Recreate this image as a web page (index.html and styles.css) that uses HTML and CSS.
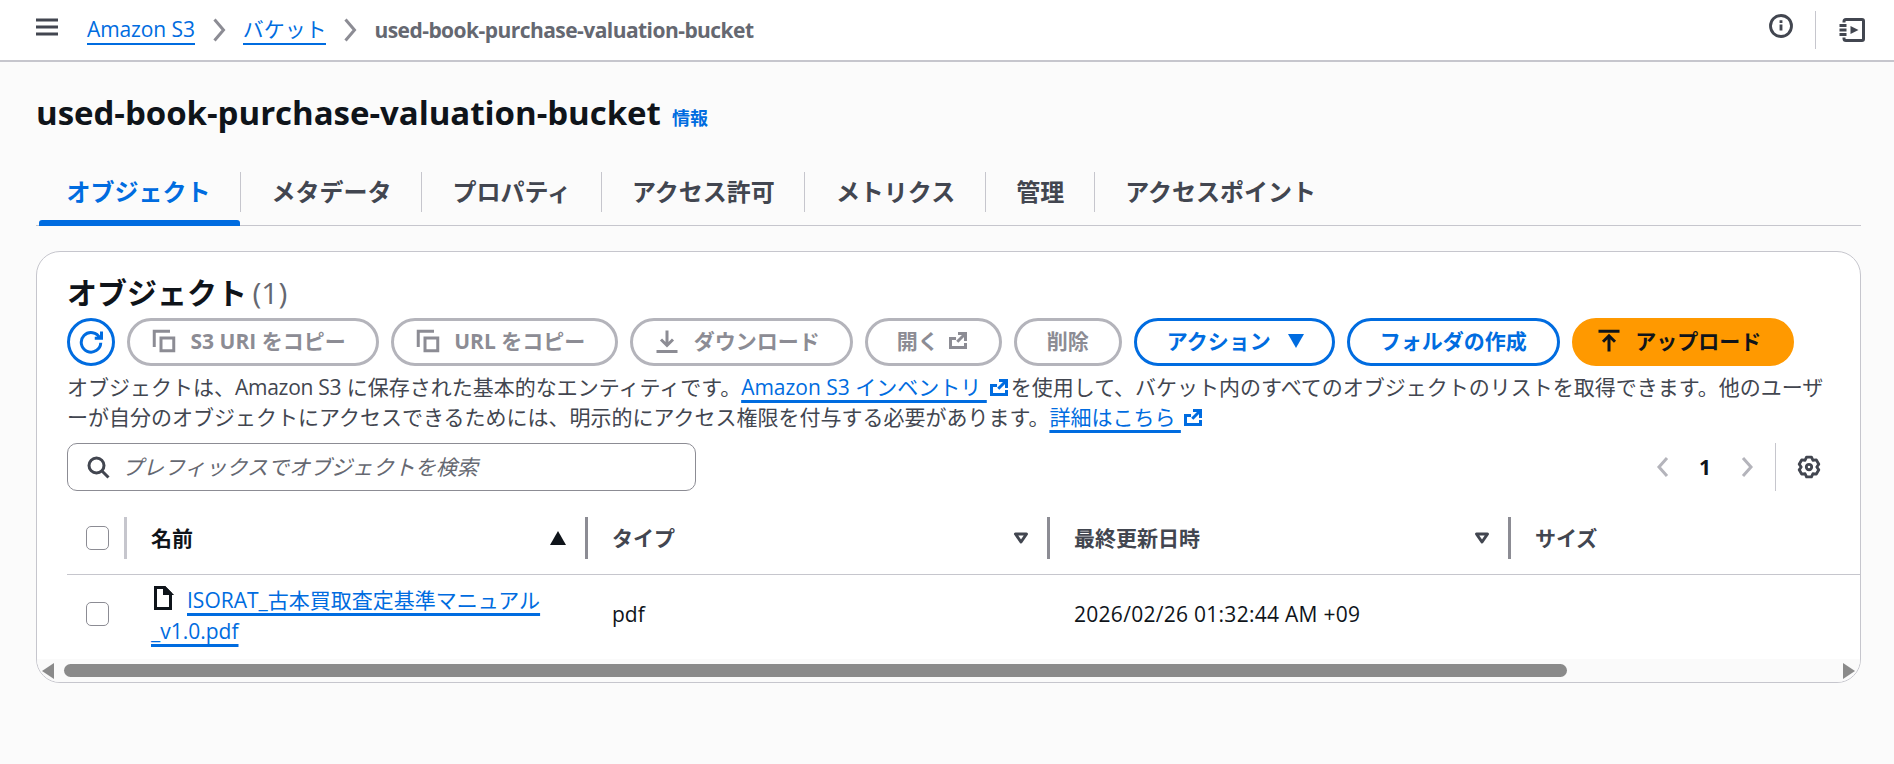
FILE: index.html
```html
<!DOCTYPE html>
<html lang="ja">
<head>
<meta charset="utf-8">
<title>used-book-purchase-valuation-bucket</title>
<link rel="stylesheet" href="styles.css">
</head>
<body>
<header class="topbar">
  <svg class="ic menu" viewBox="0 0 22 18"><path d="M0 2h22M0 9h22M0 16h22"/></svg>
  <nav class="crumbs">
    <a href="#">Amazon S3</a>
    <svg class="ic sep" viewBox="0 0 16 16"><path d="m5 1 6 7-6 7"/></svg>
    <a href="#">バケット</a>
    <svg class="ic sep" viewBox="0 0 16 16"><path d="m5 1 6 7-6 7"/></svg>
    <span class="here">used-book-purchase-valuation-bucket</span>
  </nav>
  <svg class="ic info" viewBox="0 0 16 16"><circle cx="8" cy="8" r="7"/><path d="M8 7v4M8 4.200v1.800"/></svg>
  <span class="topdiv"></span>
  <svg class="ic book" viewBox="0 0 26 24"><path d="M5 4.500V3.500a2 2 0 0 1 2-2h16a1.500 1.500 0 0 1 1.500 1.500v18a1.500 1.500 0 0 1-1.500 1.500H7a2 2 0 0 1-2-2v-1M0.500 7.500h7M0.500 12h7M0.500 16.500h7"/><path class="solid" d="M11.500 8l8 4-8 4z"/></svg>
</header>

<main class="page">
  <div class="titlerow"><h1>used-book-purchase-valuation-bucket</h1><a class="infolink" href="#">情報</a></div>
  <div class="tabs">
    <a class="tab active" href="#">オブジェクト</a>
    <a class="tab" href="#">メタデータ</a>
    <a class="tab" href="#">プロパティ</a>
    <a class="tab" href="#">アクセス許可</a>
    <a class="tab" href="#">メトリクス</a>
    <a class="tab" href="#">管理</a>
    <a class="tab last" href="#">アクセスポイント</a>
  </div>

  <section class="card">
    <div class="cardhead">
      <h2>オブジェクト <span class="count">(1)</span></h2>
      <div class="toolbar">
        <button class="btn refresh"><svg class="ic" viewBox="0 0 16 16"><path d="M10.500 5.500H15V1"/><path d="M14.500 8.500a6.500 6.500 0 1 1-.6-3"/></svg></button>
        <button class="btn off lead"><svg class="ic" viewBox="0 0 16 16"><path d="M1.500 12V1.500H12"/><path d="M6 6h8.500v8.500H6z"/></svg>S3 URI をコピー</button>
        <button class="btn off lead"><svg class="ic" viewBox="0 0 16 16"><path d="M1.500 12V1.500H12"/><path d="M6 6h8.500v8.500H6z"/></svg>URL をコピー</button>
        <button class="btn off lead"><svg class="ic" viewBox="0 0 16 16"><path d="M1 15h14M8 1v10M4 7l4 4 4-4"/></svg>ダウンロード</button>
        <button class="btn off trail">開く<svg class="ic" viewBox="0 0 16 16"><path d="M6.700 6.300H3v6h10V9.300M8 3h5v5M13 3 7.500 8.500"/></svg></button>
        <button class="btn off">削除</button>
        <button class="btn blue trail">アクション<svg class="caret" viewBox="0 0 16 14"><path d="M0 0h16L8 14z"/></svg></button>
        <button class="btn blue">フォルダの作成</button>
        <button class="btn primary lead"><svg class="ic" viewBox="0 0 16 16"><path d="M1 1.500h14M8 15V4.500M4 8.500l4-4 4 4"/></svg>アップロード</button>
      </div>
      <p class="desc">オブジェクトは、<span class="lat">Amazon S3</span> に保存された基本的なエンティティです。<a href="#">Amazon S3 インベントリ </a><svg class="ic ext" viewBox="0 0 16 16"><path d="M6.700 6.300H3v6h10V9.300M8 3h5v5M13 3 7.500 8.500"/></svg>を使用して、バケット内のすべてのオブジェクトのリストを取得できます。他のユーザーが自分のオブジェクトにアクセスできるためには、明示的にアクセス権限を付与する必要があります。<a href="#">詳細はこちら </a><svg class="ic ext" viewBox="0 0 16 16"><path d="M6.700 6.300H3v6h10V9.300M8 3h5v5M13 3 7.500 8.500"/></svg></p>
      <div class="filterrow">
        <label class="search"><svg class="ic" viewBox="0 0 16 16"><circle cx="7" cy="7" r="5"/><path d="m15 15-4.500-4.500"/></svg><span>プレフィックスでオブジェクトを検索</span></label>
        <div class="pager">
          <svg class="ic pg" viewBox="0 0 16 24"><path d="M12 3l-8 9 8 9"/></svg>
          <span class="pnum">1</span>
          <svg class="ic pg" viewBox="0 0 16 24"><path d="M4 3l8 9-8 9"/></svg>
          <span class="pdiv"></span>
          <svg class="ic gear" viewBox="0 0 16 16"><path d="M6.350 1.400H9.650L10.600 3.500 12.890 3.280 14.540 6.130 13.200 8 14.540 9.870 12.890 12.720 10.600 12.500 9.650 14.600H6.350L5.400 12.500 3.110 12.720 1.460 9.870 2.800 8 1.460 6.130 3.110 3.280 5.400 3.500z"/><circle cx="8" cy="8" r="1.800"/></svg>
        </div>
      </div>
    </div>
    <div class="table">
      <div class="th chk"><span class="box"></span></div>
      <div class="th name"><span>名前</span><svg class="sort" viewBox="0 0 16 14"><path d="M8 0l8 14H0z"/></svg></div>
      <div class="th dark"><span>タイプ</span><svg class="sort2" viewBox="0 0 16 14"><path d="M2.500 3h11L8 11z"/></svg></div>
      <div class="th dark"><span>最終更新日時</span><svg class="sort2" viewBox="0 0 16 14"><path d="M2.500 3h11L8 11z"/></svg></div>
      <div class="th plain"><span>サイズ</span></div>
      <div class="td chk"><span class="box"></span></div>
      <div class="td file"><div class="filetext"><svg class="ic fileic" viewBox="0 0 16 16"><path d="M13 15H3V1h6l4 4z"/><path class="corner" d="M9 1v4h4z"/></svg><a href="#">ISORAT_古本買取査定基準マニュアル_v1.0.pdf</a></div></div>
      <div class="td">pdf</div>
      <div class="td date">2026/02/26 01:32:44 AM +09</div>
      <div class="td"></div>
    </div>
    <div class="scroll">
      <svg class="arrow" viewBox="0 0 12 16"><path d="M12 0v16L0 8z"/></svg>
      <div class="track"><div class="thumb"></div></div>
      <svg class="arrow" viewBox="0 0 12 16"><path d="M0 0v16l12-8z"/></svg>
    </div>
  </section>
</main>
</body>
</html>
```

FILE: styles.css
```css
* { box-sizing: border-box; }
html, body { margin: 0; height: 764px; overflow: hidden; }
body {
  background: #fbfbfb;
  color: #0f141a;
  font-family: "Open Sans", "Noto Sans CJK JP", sans-serif;
  font-size: 21px;
  line-height: 30px;
}
a { color: #006ce0; }
.ic { width: 24px; height: 24px; fill: none; stroke: currentColor; stroke-width: 2; flex: none; }
.solid { fill: currentColor; stroke: none; }

.topbar {
  height: 62px;
  background: #fff;
  border-bottom: 2px solid #c6c6cd;
  display: flex;
  align-items: center;
  padding: 0 29px 0 36px;
  color: #424650;
}
.menu { width: 22px; height: 18px; stroke-width: 3; margin-bottom: 6px; }
.crumbs { display: flex; align-items: center; margin-left: 29px; flex: 1; }
.crumbs a { text-decoration: none; border-bottom: 2px solid #006ce0; line-height: 27px; letter-spacing: -0.100px; }
.sep { color: #8c8c94; margin: 0 12px; }
.here { font-weight: 700; color: #656871; letter-spacing: -0.550px; }
.info { margin-bottom: 8px; stroke-width: 1.900; }
.topdiv { width: 1px; height: 38px; background: #c6c6cd; margin: 0 23px 0 22px; }
.book { width: 26px; height: 24px; stroke-width: 3; }

.page { padding: 0 33px 0 36px; }
.titlerow { display: flex; align-items: baseline; height: 110px; padding-top: 31px; gap: 11px; }
h1 { margin: 0; font-size: 33px; line-height: 40px; font-weight: 700; letter-spacing: -0.030px; }
.infolink { font-size: 18px; font-weight: 700; text-decoration: none; }

.tabs { display: flex; height: 54px; border-bottom: 1px solid #c6c6cd; }
.tab {
  position: relative;
  display: flex;
  align-items: center;
  height: 53px;
  padding: 0 30.500px 14px;
  font-size: 24px;
  font-weight: 700;
  color: #424650;
  text-decoration: none;
  white-space: nowrap;
}
.tab::after {
  content: "";
  position: absolute;
  right: 0;
  top: 0;
  bottom: 13px;
  width: 1px;
  background: #c6c6cd;
}
.tab.last::after { display: none; }
.tab.active { color: #006ce0; }
.tab.active::before {
  content: "";
  position: absolute;
  left: 3px;
  right: 1px;
  bottom: -1px;
  height: 6px;
  border-radius: 3px 3px 0 0;
  background: #006ce0;
}

.card {
  margin-top: 25px;
  height: 432px;
  background: #fff;
  border: 1.500px solid #c6c6cd;
  border-radius: 24px;
  overflow: hidden;
  display: flex;
  flex-direction: column;
}
.cardhead { padding: 21px 30px 0; }
h2 { margin: 0; font-size: 30px; line-height: 40px; font-weight: 700; }
.count { font-weight: 400; color: #656871; margin-left: -2.400px; }
.toolbar { display: flex; gap: 12px; margin-top: 5px; height: 48px; }
.btn {
  display: inline-flex;
  align-items: center;
  justify-content: center;
  height: 48px;
  padding: 0 30px 2px;
  border: 3px solid #006ce0;
  border-radius: 30px;
  background: #fff;
  color: #006ce0;
  font: 700 21px/30px "Open Sans", "Noto Sans CJK JP", sans-serif;
  white-space: nowrap;
}
.lead { padding-left: 22px; gap: 14.500px; }
.trail { gap: 11px; }
.off.trail { padding-left: 29px; padding-right: 29px; gap: 7px; }
.refresh { width: 48px; padding: 0; border-radius: 50%; }
.off { border-color: #b4b4bb; color: #8c8c94; }
.blue .caret { width: 16px; height: 14px; fill: #006ce0; margin-left: 6px; margin-right: -2px; }
.primary { background: #ff9900; border-color: #ff9900; color: #0f141a; }
.desc {
  margin: 6px 0 0;
  width: 1762px;
  color: #424650;
}
.lat { letter-spacing: -0.270px; }
.desc a { text-decoration-thickness: 2.500px; text-underline-offset: 5px; }
.ext { color: #006ce0; vertical-align: -5px; }
.filterrow { display: flex; justify-content: space-between; align-items: center; margin-top: 11px; height: 48px; }
.search {
  display: flex;
  align-items: center;
  gap: 12px;
  width: 629px;
  height: 48px;
  padding: 0 18px;
  border: 1.500px solid #8c8c94;
  border-radius: 10px;
  background: #fff;
  color: #656871;
  font-style: italic;
}
.search .ic { color: #424650; }
.pager { display: flex; align-items: center; color: #424650; margin-right: 9px; }
.pg { width: 16px; color: #b4b4bb; stroke-width: 3; }
.pnum { width: 68px; text-align: center; font-weight: 700; color: #0f141a; }
.pdiv { width: 1px; height: 48px; background: #c6c6cd; margin: 0 21px 0 20px; }
.gear { stroke-width: 1.900; stroke-linejoin: round; }

.table {
  flex: 1;
  margin-left: 30px;
  display: grid;
  grid-template-columns: 60px 461px 462px 461px 1fr;
  grid-template-rows: 74px 1fr;
  padding-top: 10px;
}
.th {
  position: relative;
  display: flex;
  align-items: center;
  justify-content: space-between;
  padding: 0 21px 0 24px;
  border-bottom: 1.500px solid #c6c6cd;
  font-weight: 700;
  color: #424650;
}
.th::after {
  content: "";
  position: absolute;
  right: 0;
  top: 16px;
  height: 42px;
  width: 3px;
  background: #8c8c94;
}
.th.name { color: #0f141a; padding-right: 22px; }
.th.plain::after { display: none; }
.th.chk { padding: 0 0 0 19px; justify-content: flex-start; }
.th.chk::after { background: #c6c6cd; }
.box {
  width: 23px;
  height: 24px;
  border: 1.500px solid #8c8c94;
  border-radius: 5px;
  background: #fff;
}
.sort { width: 16px; height: 14px; fill: #0f141a; }
.sort2 { width: 16px; height: 14px; fill: none; stroke: #424650; stroke-width: 3; stroke-linejoin: round; }
.td {
  display: flex;
  align-items: center;
  padding: 0 0 6px 24px;
  color: #0f141a;
}
.td.chk { padding-left: 19px; }
.date { letter-spacing: 0.280px; }
.filetext { width: 420px; line-height: 31px; margin-top: 4px; }
.filetext a { text-decoration-thickness: 2.500px; text-underline-offset: 5px; }
.fileic {
  margin: 0 12px 0 0;
  vertical-align: -2px;
  color: #0f141a;
}
.corner { fill: currentColor; }
.scroll {
  height: 23px;
  flex: none;
  background: #fafafa;
  display: flex;
  align-items: center;
  padding: 0 5px;
}
.arrow { width: 12px; height: 16px; fill: #8a8a8a; flex: none; }
.track { flex: 1; padding: 0 10px; }
.thumb { width: 1503px; height: 13px; border-radius: 7px; background: #8a8a8a; }
```
